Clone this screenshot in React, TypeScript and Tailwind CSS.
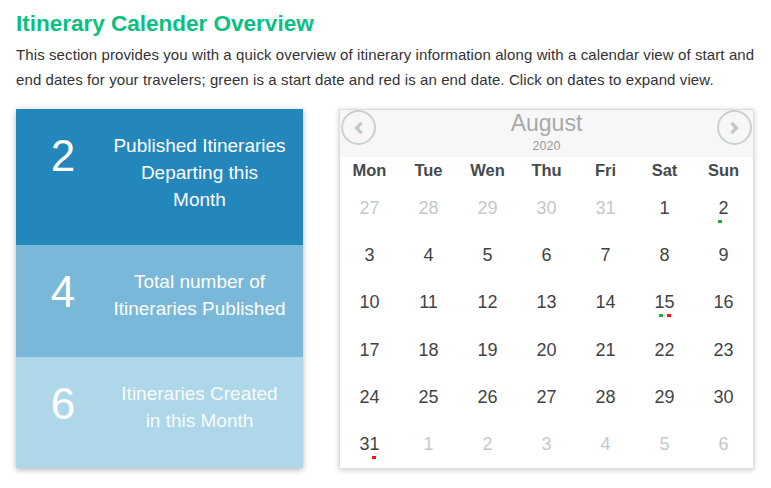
import React from "react";

type Day = { d: number; muted?: boolean; green?: boolean; red?: boolean };

const rows: Day[][] = [
  [{ d: 27, muted: true }, { d: 28, muted: true }, { d: 29, muted: true }, { d: 30, muted: true }, { d: 31, muted: true }, { d: 1 }, { d: 2, green: true }],
  [{ d: 3 }, { d: 4 }, { d: 5 }, { d: 6 }, { d: 7 }, { d: 8 }, { d: 9 }],
  [{ d: 10 }, { d: 11 }, { d: 12 }, { d: 13 }, { d: 14 }, { d: 15, green: true, red: true }, { d: 16 }],
  [{ d: 17 }, { d: 18 }, { d: 19 }, { d: 20 }, { d: 21 }, { d: 22 }, { d: 23 }],
  [{ d: 24 }, { d: 25 }, { d: 26 }, { d: 27 }, { d: 28 }, { d: 29 }, { d: 30 }],
  [{ d: 31, red: true }, { d: 1, muted: true }, { d: 2, muted: true }, { d: 3, muted: true }, { d: 4, muted: true }, { d: 5, muted: true }, { d: 6, muted: true }],
];

const days = ["Mon", "Tue", "Wen", "Thu", "Fri", "Sat", "Sun"];

function Circle({ dir }: { dir: "left" | "right" }) {
  return (
    <div className="w-[35px] h-[35px] rounded-full border-2 border-[#c9d0d1] flex items-center justify-center">
      <svg width="12" height="12" viewBox="0 0 12 12">
        {dir === "left" ? (
          <polyline points="7.5,2 3.5,6 7.5,10" fill="none" stroke="#bfc7c8" strokeWidth="3.2" strokeLinecap="square" />
        ) : (
          <polyline points="4.5,2 8.5,6 4.5,10" fill="none" stroke="#bfc7c8" strokeWidth="3.2" strokeLinecap="square" />
        )}
      </svg>
    </div>
  );
}

function Stat({ n, label, bg, h, fade }: { n: string; label: React.ReactNode; bg: string; h: string; fade?: boolean }) {
  return (
    <div className={`flex items-start pt-[22px] ${bg} ${h}`}>
      <div className="w-[94px] text-center text-[44px] leading-[50px] text-white">{n}</div>
      <div className={`flex-1 pr-[14px] text-center text-[19px] leading-[27px] mt-[1px] ${fade ? "text-white/95" : "text-white"}`}>{label}</div>
    </div>
  );
}

export default function App() {
  return (
    <div className="w-[771px] h-[488px] bg-white pl-4 pt-[11px]" style={{ fontFamily: '"Liberation Sans", Arial, Helvetica, sans-serif' }}>
      <h1 className="text-[22.5px] leading-[26px] font-bold text-[#08c081]">Itinerary Calender Overview</h1>
      <p className="mt-[5px] w-[748px] text-[15px] tracking-[0.1px] leading-[25px] text-[#333]">
        This section provides you with a quick overview of itinerary information along with a calendar view of start and end dates for your travelers; green is a start date and red is an end date. Click on dates to expand view.
      </p>
      <div className="mt-[17px] flex items-start gap-[36px]">
        <div className="w-[287px] shadow-[0_2px_6px_rgba(0,0,0,0.28)]">
          <Stat n="2" bg="bg-[#2387bb]" h="h-[136px]" label={<>Published Itineraries<br />Departing this<br />Month</>} />
          <Stat n="4" bg="bg-[#79b8d8]" h="h-[112px]" label={<>Total number of<br />Itineraries Published</>} />
          <Stat n="6" bg="bg-[#aed7e9]" h="h-[111px]" fade label={<>Itineraries Created<br />in this Month</>} />
        </div>
        <div className="w-[415px] border border-[#dedede] shadow-[0_1px_5px_rgba(0,0,0,0.22)] bg-white">
          <div className="h-[47px] bg-[#f7f7f7] flex justify-between items-start px-[1px]">
            <Circle dir="left" />
            <div className="flex flex-col items-center">
              <div className="text-[23px] leading-[27px] text-[#a9a9a9]">August</div>
              <div className="mt-[2px] text-[12.5px] leading-[14px] text-[#9a9a9a]">2020</div>
            </div>
            <Circle dir="right" />
          </div>
          <div className="grid grid-cols-7 h-[27px] items-center">
            {days.map((d) => (
              <div key={d} className="text-center text-[16.5px] font-bold text-[#444a4d]">{d}</div>
            ))}
          </div>
          {rows.map((r, i) => (
            <div key={i} className="grid grid-cols-7 h-[47.3px] items-center">
              {r.map((c, j) => (
                <div key={j} className="relative flex justify-center">
                  <span className={`text-[18px] leading-[22px] ${c.muted ? "text-[#c3c9ca]" : "text-[#3f4446]"}`}>{c.d}</span>
                  {c.green && <span className="absolute left-1/2 top-[23px] -ml-[6px] w-[4px] h-[3px] bg-[#1fae3c]" />}
                  {c.red && <span className="absolute left-1/2 top-[23px] ml-[2px] w-[4px] h-[3px] bg-[#ff1010]" />}
                </div>
              ))}
            </div>
          ))}
        </div>
      </div>
    </div>
  );
}
